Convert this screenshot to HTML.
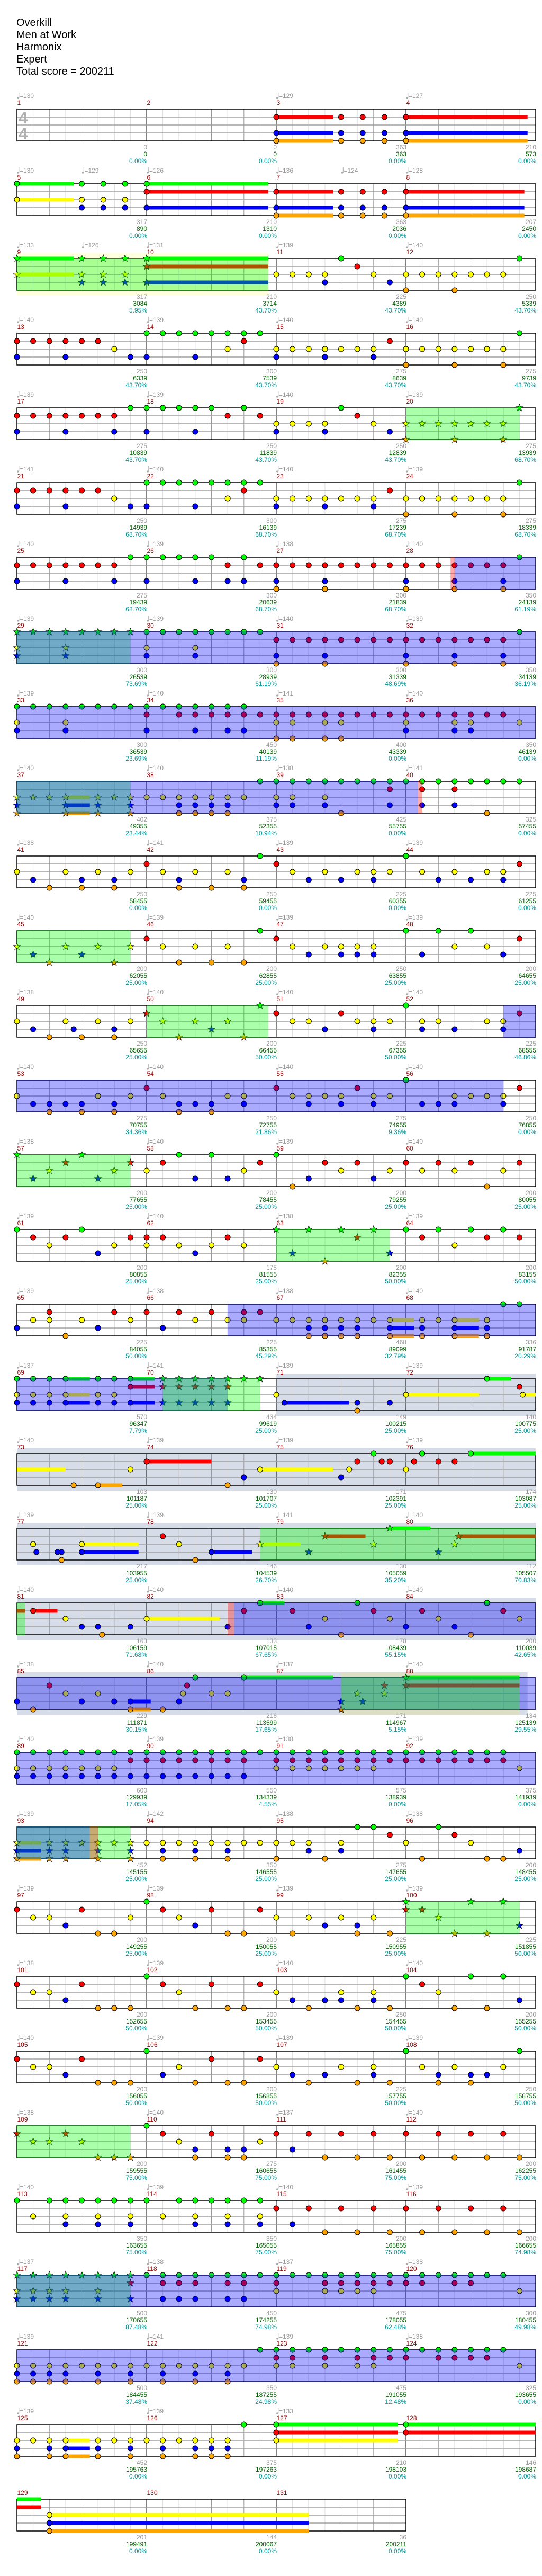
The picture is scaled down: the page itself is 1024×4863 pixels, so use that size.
<!DOCTYPE html>
<html><head><meta charset="utf-8">
<style>
html,body{margin:0;padding:0;background:#fff;}
#v{position:absolute;left:0;top:0;width:1024px;height:4858px;}
</style></head>
<body>
<div id="v"></div>
<script>
var X0=32,S=245/8;
function px(p){return X0+p*S;}
var C={g:'#00ff00',r:'#ff0000',y:'#ffff00',b:'#0000ff',o:'#ffa500'};
var L={g:0,r:1,y:2,b:3,o:4};
var R3="0/rb 1/r 2/r 3/rb 4/r 5/r 6/y 7/b 8/gb 9/g 10/g 11/gb 12/g 13/gy 14/gr 15/g 16/yb 17/y 18/y 19/yb 20/y 21/y 22/yb 23/r 24/yo 25/y 26/y 27/yo 28/y 29/y 30/yo 31/g";
var R=[
{n:"16/rbo/3.5 20/rbo 21.33/rbo 22.67/rbo 24/rbo/7.5",t:"0:130 16:129 24:127",l:"0 0 0.00%,0 0 0.00%,363 363 0.00%,210 573 0.00%"},
{n:"0/gy/3.5 4/gyb 5.33/gyb 6.67/gyb 8/grb/7.5 16/rbo/3.5 20/rbo 21.33/rbo 22.67/rbo 24/rbo/7.3",t:"0:130 4:129 8:126 16:136 20:124 24:128",l:"317 890 0.00%,210 1310 0.00%,363 2036 0.00%,207 2450 0.00%"},
{n:"0/gy/3.5 4/gyb 5.33/gyb 6.67/gyb 8/grb/7.5 16/y 17/y 18/y 19/yb 20/g 21/r 22/y 23/b 24/yo 25/y 26/y 27/yo 28/y 29/y 30/y 31/g",o:"y 0 15.5,g 0 15.5",t:"0:133 4:126 8:131 16:139 24:140",l:"317 3084 5.95%,210 3714 43.70%,225 4389 43.70%,250 5339 43.70%"},
{n:R3,t:"140 139 140 140",l:"250 6339 43.70%,300 7539 43.70%,275 8639 43.70%,275 9739 43.70%"},
{n:"0/rb 1/r 2/r 3/rb 4/r 5/r 6/rb 7/g 8/gb 9/g 10/g 11/gb 12/g 13/r 14/g 15/r 16/yb 17/y 18/y 19/yb 20/g 21/r 22/y 23/b 24/yo 25/y 26/y 27/yo 28/y 29/y 30/yo 31/g",o:"g 24 31",t:"139 139 140 139",l:"275 10839 43.70%,250 11839 43.70%,250 12839 43.70%,275 13939 68.70%"},
{n:R3,t:"141 140 140 139",l:"250 14939 68.70%,300 16139 68.70%,275 17239 68.70%,275 18339 68.70%"},
{n:"0/rb 1/r 2/r 3/rb 4/r 5/r 6/rb 7/g 8/gb 9/g 10/g 11/gb 12/g 13/rb 14/gb 15/r 16/rbo 17/r 18/r 19/rbo 20/r 21/r 22/r 23/r 24/rbo 25/r 26/r 27/rbo 28/r 29/r 30/rbo 31/g",o:"p 26.75 27,b 27 32",t:"140 139 138 140",l:"275 19439 68.70%,300 20639 68.70%,300 21839 68.70%,350 24139 61.19%"},
{n:"0/gyb 1/g 2/g 3/gyb 4/g 5/g 6/g 7/g 8/gyb 9/g 10/g 11/gyb 12/g 13/g 14/g 15/g 16/rbo 17/r 18/r 19/rbo 20/r 21/r 22/r 23/r 24/rbo 25/r 26/r 27/rbo 28/r 29/r 30/rbo 31/g",o:"g 0 7,b 0 32",t:"139 139 140 139",l:"300 26539 73.69%,300 28939 61.19%,300 31339 48.69%,350 34139 36.19%"},
{n:"0/gyb 1/g 2/g 3/gyb 4/g 5/g 6/g 7/g 8/grb 9/g 10/gr 11/grb 12/gr 13/grb 14/grb 15/r 16/ryo 17/ryo 18/r 19/ryo 20/ryo 21/r 22/r 23/r 24/ryb 25/r 26/r 27/ryb 28/ryb 29/r 30/r 31/y",o:"b 0 32",t:"139 140 141 140",l:"300 36539 23.69%,450 40139 11.19%,400 43339 0.00%,350 46139 0.00%"},
{n:"0/ybo 1/y 2/y 3/ybo/1.5 5/ybo 6/y 7/ybo 8/y 9/y 10/ybo 11/ybo 12/ybo 13/ybo 14/y 15/g 16/gyb 17/gyb 18/g 19/gyb 20/go 21/g 22/g 23/grb 24/g 25/grb 26/g 27/grb 28/g 29/go 30/g 31/g",o:"g 0 7,b 0 24.75,p 24.75 25",t:"140 140 138 141",l:"402 49355 23.44%,375 52355 10.94%,425 55755 0.00%,325 57455 0.00%"},
{n:"0/y 1/b 2/o 3/y 4/bo 5/y 6/bo 7/y 8/r 9/y 10/bo 11/y 12/o 13/y 14/bo 15/g 16/r 17/y 18/b 19/y 20/b 21/y 22/yb 23/y 24/g 25/y 26/b 27/y 28/b 29/y 30/yb 31/r",t:"138 141 139 139",l:"250 58455 0.00%,250 59455 0.00%,225 60355 0.00%,225 61255 0.00%"},
{n:"0/y 1/b 2/o 3/y 4/b 5/y 6/o 7/y 8/r 9/y 10/o 11/y 12/o 13/y 14/o 15/g 16/r 17/y 18/b 19/y 20/yb 21/yb 22/yb 24/g 25/b 26/g 27/y 28/g 29/y 30/b 31/r",o:"g 0 7",t:"140 139 139 139",l:"200 62055 25.00%,200 62855 25.00%,250 63855 25.00%,200 64655 25.00%"},
{n:"0/y 1/b 2/o 3/y 3.5/b 4/o 5/y 6/bo 7/y 8/r 9/y 10/o 11/y 12/b 13/y 14/o 15/g 16/r 17/y 18/y 19/b 20/r 21/y 22/yb 23/y 24/g 25/yb 26/y 27/b 29/y 30/yb 31/r",o:"g 8 15.5,b 30 32",t:"138 140 140 140",l:"250 65655 25.00%,200 66455 50.00%,225 67355 50.00%,225 68555 46.86%"},
{n:"0/y 1/b 2/bo 3/b 4/bo 5/y 6/bo 7/y 8/r 9/y 10/bo 11/b 12/bo 13/y 14/yb 16/r 17/y 18/yb 19/y 20/yb 21/r 22/yb 23/y 24/g 25/b 26/b 27/yb 28/y 29/y 30/yb 31/r",o:"b 0 30",t:"140 140 140 140",l:"275 70755 34.36%,250 72755 21.86%,275 74955 9.36%,250 76855 0.00%"},
{n:"0/g 1/b 2/y 3/r 4/g 5/b 6/y 7/r 8/y 9/r 10/g 11/b 12/g 13/b 14/y 15/r 16/g 17/o 18/b 19/r 20/y 21/r 22/b 23/y 24/r 25/y 26/r 27/y 28/r 29/o 30/y 31/r",o:"g 0 7",t:"138 140 139 140",l:"200 77655 25.00%,200 78455 25.00%,200 79255 25.00%,200 80055 25.00%"},
{n:"0/g 1/r 2/y 3/r 4/g 5/b 6/y 7/r 8/ry 9/r 10/y 11/b 12/y 13/r 14/y 16/g 17/b 18/g 19/o 20/g 21/r 22/g 23/b 24/g 25/r 26/g 27/y 28/g 29/r 30/g 31/r",o:"g 16 23",t:"139 140 138 139",l:"200 80855 25.00%,175 81555 25.00%,200 82355 50.00%,200 83155 50.00%"},
{n:"0/b 1/y 2/ry 3/o 4/y 5/b 6/r 7/y 8/r 9/b 10/r 11/y 12/r 13/y 14/ry 15/r 16/y 17/y 18/ybo 19/ybo 20/ybo 21/ybo 22/y 23/ybo/1.5 25/ybo 26/y 27/ybo/1.5 29/ybo 30/g 31/g",o:"b 13 32",t:"139 138 138 140",l:"225 84055 50.00%,225 85355 45.29%,468 89099 32.79%,336 91787 20.29%"},
{n:"0/gyb 1/gyb 2/gyb 3/gyb/1.5 5/gyb 6/gyb 7/grb/1.5 9/grb 10/grb 11/grb 12/grb 13/grb 14/g 15/g 16/y 16.5/b/4 21/bo 23/b 24/y/4.5 29/g/1.5 31/r 31.2/y/0.8",o:"k 16 32,b 0 13,g 9 15",t:"137 141 139 139",l:"570 96347 7.79%,434 99619 25.00%,149 100215 25.00%,140 100775 25.00%"},
{n:"0/y/3/n 3.5/o 5/o/1.5 7/y 8/r/4 13/o 14/b 15/y/4.5 20/b 20.5/y 21/r 22/g 22.5/r 23/r 24/y 24.5/r 25/g 26/r 27/r 28/g/4",o:"k 0 32",t:"140 139 139 139",l:"103 101187 25.00%,130 101707 25.00%,171 102391 25.00%,174 103087 25.00%"},
{n:"1/y 1.2/b 2.5/b 2.75/bo 4/yb/3.5 9/r 10/y 11/o 12/b/2.5 15/y/2.5 18/b 19/r/2.5 22/y 23/g/2.5 26/b 27/y 27.25/r/4.75",o:"k 0 32,g 15 32",t:"139 139 141 140",l:"217 103955 25.00%,146 104539 26.70%,130 105059 35.20%,112 105507 70.83%"},
{n:"0/r/0.5/n 1/r/1.5 3/y 4/b 5/b 5.25/o 7/b 8/y/4.5 13/b 14/r 15/g/1.5 17/r 18/b 19/y 20/o 21/g 22/r 23/y 24/b 25/r 26/y 27/b 28/o 29/g 30/r 31/y",o:"k 0 32,g 0 0.5,p 13 13.4,b 13.4 32",t:"140 140 140 140",l:"163 106159 71.68%,133 107015 67.65%,178 108439 55.15%,200 110039 42.65%"},
{n:"0/b 1/o 2/r 3/y 4/b 5/y 6/b 7/bo/1.25 9/o 10/b 10.25/y 10.5/r 11/g 12/y 13/y 14/g/5.5 20/bo 21/y 21.33/b 22.67/ry 24/gr/7",o:"k 0 31.5,Y 20 31,b 0 32,g 20 31",t:"138 140 137 140",l:"229 111871 30.15%,216 113599 17.65%,171 114967 5.15%,134 125139 29.55%"},
{n:"0/gyb 1/gyb 2/gyb 3/gyb 4/gyb 5/gyb 6/gyb 7/grb 8/grb 9/grb 10/grb 11/grb 12/grb 13/grb 14/grb 15/g 16/gry 17/gry 18/gry 19/gry 20/gry 21/gry 22/gry 23/gr 24/gr 25/gr 26/gr 27/gr 28/gr 29/gr 30/gr 31/y",o:"b 0 32",t:"140 139 138 139",l:"600 129939 17.05%,550 134339 4.55%,575 138939 0.00%,375 141939 0.00%"},
{n:"0/ybo/1.5 2/ybo 3/ybo 4/y 5/ybo 6/y 7/ybo 8/y 9/ybo 10/y 11/ybo 12/y 13/ybo 14/y 15/y 16/yo 17/y 18/yb 19/o 20/yb 21/g 22/g 23/r 24/y 25/o 26/g 27/r 28/y 29/o 30/o 31/b",o:"g 0 7,b 0 4.5,p 4.5 5",t:"139 142 138 138",l:"452 145155 25.00%,350 146555 25.00%,275 147655 25.00%,200 148455 25.00%"},
{n:"0/r 1/y 2/y 3/b 4/r 5/o 6/o 7/y 8/g 9/r 10/y 11/b 12/r 13/o 14/o 15/r 16/y 17/o 18/y 19/b 20/y 21/bo 22/y 23/o 24/gr 25/r 26/y 27/o 28/g 29/o 30/g 31/b",o:"g 24 31",t:"139 139 139 139",l:"200 149255 25.00%,200 150055 25.00%,225 150955 25.00%,225 151855 50.00%"},
{n:"0/r 1/y 2/y 3/b 4/r 5/o 6/o 7/o 8/g 9/r 10/y 11/o 12/r 13/o 14/o 15/r 16/y 17/b 18/o 19/b 20/yb 21/o 22/yb 23/o 24/g 25/r 26/y 27/o 28/g 29/o 30/g 31/b",t:"138 139 140 140",l:"200 152655 50.00%,200 153455 50.00%,250 154455 50.00%,200 155255 50.00%"},
{n:"0/r 1/y 2/y 3/b 4/r 5/o 6/o 7/o 8/g 9/b 10/y 11/o 12/r 13/o 14/o 15/r 16/y 17/b 18/o 19/b 20/y 21/o 22/yb 23/o 24/g 25/y 26/bo 27/y 28/bo 29/b 30/y 31/g",t:"140 139 139 139",l:"200 156055 50.00%,200 156855 50.00%,225 157755 50.00%,250 158755 50.00%"},
{n:"0/r 1/y 2/y 3/r 4/y 5/o 6/o 7/o 8/g 9/r 10/y 11/bo 12/r 13/bo 14/bo 15/y 16/r 17/b 18/r 19/o 20/r 21/o 22/r 23/o 24/r 25/o 26/r 27/o 28/r 29/o 30/r 31/o",o:"g 0 7",t:"138 140 137 140",l:"200 159555 75.00%,275 160655 75.00%,200 161455 75.00%,200 162255 75.00%"},
{n:"0/g 1/y 2/g 3/gyb 4/g 5/gyb 6/g 7/gyb 8/g 9/y 10/g 11/gyb 12/g 13/gyb 14/g 15/gyb 16/r 17/b 18/r 19/o 20/r 21/o 22/r 23/o 24/r 25/o 26/r 27/o 28/r 29/o 30/r 31/o",t:"140 139 140 139",l:"350 163655 75.00%,350 165055 75.00%,200 165855 75.00%,200 166655 74.98%"},
{n:"0/gyb 1/gyb 2/gyb 3/gyb 4/g 5/gyb 6/g 7/grb 8/g 9/grb 10/grb 11/grb 12/g 13/grb 14/grb 15/g 16/gry 17/g 18/g 19/gry 20/gry 21/gry 22/gry 23/gr 24/gr 25/gr 26/g 27/gr 28/gr 29/g 30/g 31/y",o:"g 0 7,b 0 32",t:"137 138 137 138",l:"500 170655 87.48%,450 174255 74.98%,475 178055 62.48%,300 180455 49.98%"},
{n:"0/ybo 1/ybo 2/ybo 3/ybo 4/y 5/ybo 6/y 7/ybo 8/y 9/ybo 10/y 11/ybo 12/y 13/ybo 14/y 15/g 16/gry 17/gry 18/g 19/gry 20/g 21/gry 22/gry 23/gr 24/gr 25/g 26/gr 27/gr 28/gr 29/gr 30/g 31/y",o:"b 0 32",t:"139 141 139 138",l:"500 184455 37.48%,350 187255 24.98%,475 191055 12.48%,325 193655 0.00%"},
{n:"0/ybo 1/y 2/ybo 3/ybo/1.5 5/ybo 6/y 7/ybo 8/y 9/ybo 10/y 11/ybo 12/ybo 13/ybo 14/g 16/gry/7.5 24/gr/8",t:"139 139 133",l:"452 195763 0.00%,375 197263 0.00%,210 198103 0.00%,146 198687 0.00%"},
{n:"0/gr/1.5/n 2/ybo/16",m:3,t:"",l:"201 199491 0.00%,144 200067 0.00%,36 200211 0.00%"}
];
function star(cx,cy,Ro){var p=[];for(var i=0;i<10;i++){var a=-Math.PI/2+i*Math.PI/5;var r=i%2?Ro*0.42:Ro;p.push((cx+r*Math.cos(a)).toFixed(1)+','+(cy+r*Math.sin(a)).toFixed(1));}return p.join(' ');}
var F='font-family="Liberation Sans, DejaVu Sans, sans-serif"';
var s='<svg xmlns="http://www.w3.org/2000/svg" width="1024" height="4858" viewBox="0 0 1024 4858">';
var tl=["Overkill","Men at Work","Harmonix","Expert","Total score = 200211"];
tl.forEach(function(t,i){s+='<text x="31" y="'+(49+23*i)+'" font-size="20" fill="#000" '+F+'>'+t+'</text>';});
R.forEach(function(d,r){
 var T=206+141*r,nm=d.m||4,W=nm*8,wpx=W*S;
 var ov=(d.o||"").split(",").filter(function(x){return x;}).map(function(x){var a=x.split(" ");return {t:a[0],a:+a[1],b:+a[2]};});
 // background bands
 ov.forEach(function(o){
  if(o.t=='k'||o.t=='y'||o.t=='Y'){var c=o.t=='k'?'#d6dde8':(o.t=='y'?'#ffffdd':'#dcdfc6');
   s+='<rect x="'+px(o.a)+'" y="'+(T-10)+'" width="'+((o.b-o.a)*S)+'" height="80" fill="'+c+'"/>';}
 });
 // grid
 for(var k=1;k<W;k++){var x=px(k).toFixed(1);var c=k%8==0?'#000':(k%2==0?'#999':'#ddd');
  s+='<line x1="'+x+'" y1="'+T+'" x2="'+x+'" y2="'+(T+60)+'" stroke="'+c+'" stroke-width="1"/>';}
 for(var j=1;j<4;j++){s+='<line x1="32" y1="'+(T+15*j)+'" x2="'+(32+wpx)+'" y2="'+(T+15*j)+'" stroke="#a0a0a0" stroke-width="1.5"/>';}
 s+='<rect x="32" y="'+T+'" width="'+wpx+'" height="60" fill="none" stroke="#000" stroke-width="1.5"/>';
 if(r==0){s+='<text x="35" y="'+(T+27)+'" font-size="31" font-weight="bold" fill="#b0b0b0" '+F+'>4</text><text x="35" y="'+(T+57)+'" font-size="31" font-weight="bold" fill="#b0b0b0" '+F+'>4</text>';}
 // notes
 var items=d.n.split(" ").map(function(x){var a=x.split("/");return {p:+a[0],l:a[1],len:a[2]?+a[2]:0,n:a[3]=='n'};});
 function inG(p){return ov.some(function(o){return o.t=='g'&&p>=o.a-0.05&&p<=o.b+0.05;});}
 items.forEach(function(it){if(it.len){it.l.split("").forEach(function(c){
  s+='<rect x="'+px(it.p).toFixed(1)+'" y="'+(T+15*L[c]-3.5)+'" width="'+(it.len*S).toFixed(1)+'" height="7" fill="'+C[c]+'"/>';});}});
 items.forEach(function(it){if(it.n)return;var g=inG(it.p);it.l.split("").forEach(function(c){
  var cx=px(it.p),cy=T+15*L[c];
  if(g)s+='<polygon points="'+star(cx,cy,7)+'" fill="'+C[c]+'" stroke="#000" stroke-width="0.8"/>';
  else s+='<ellipse cx="'+cx.toFixed(1)+'" cy="'+cy+'" rx="5" ry="5" fill="'+C[c]+'" stroke="#000" stroke-width="1"/>';});});
 // overlays
 ov.forEach(function(o){var c=null;
  if(o.t=='g')c='rgba(0,255,0,0.333)';else if(o.t=='b')c='rgba(0,0,255,0.333)';else if(o.t=='p')c='rgba(255,0,0,0.333)';
  if(c)s+='<rect x="'+px(o.a).toFixed(1)+'" y="'+(T-1)+'" width="'+((o.b-o.a)*S).toFixed(1)+'" height="62" fill="'+c+'"/>';});
 // measure numbers
 for(var m=0;m<nm;m++){s+='<text x="'+(px(8*m)+0.5)+'" y="'+(T-8)+'" font-size="12" fill="#990000" '+F+'>'+(4*r+m+1)+'</text>';}
 // tempos
 if(d.t){var tp=d.t.split(" ");tp.forEach(function(x,i){var pos,val;if(x.indexOf(':')>=0){var a=x.split(':');pos=+a[0];val=a[1];}else{pos=i*8;val=x;}
  var xx=px(pos);
  s+='<ellipse cx="'+(xx+2)+'" cy="'+(T-21)+'" rx="2" ry="1.6" fill="#aaa"/><line x1="'+(xx+3.8)+'" y1="'+(T-21)+'" x2="'+(xx+3.8)+'" y2="'+(T-31)+'" stroke="#aaa" stroke-width="1"/>';
  s+='<text x="'+(xx+5)+'" y="'+(T-21)+'" font-size="12" fill="#999" '+F+'>='+val+'</text>';});}
 // score labels
 d.l.split(",").forEach(function(x,i){var a=x.split(" ");var xx=(px(8*(i+1))+1).toFixed(1);
  s+='<text x="'+xx+'" y="'+(T+76)+'" font-size="12" fill="#999" text-anchor="end" '+F+'>'+a[0]+'</text>';
  s+='<text x="'+xx+'" y="'+(T+89)+'" font-size="12" fill="#006400" text-anchor="end" '+F+'>'+a[1]+'</text>';
  s+='<text x="'+xx+'" y="'+(T+102)+'" font-size="12" fill="#009999" text-anchor="end" '+F+'>'+a[2]+'</text>';});
});
s+='</svg>';
document.getElementById('v').innerHTML=s;
</script>
</body></html>
